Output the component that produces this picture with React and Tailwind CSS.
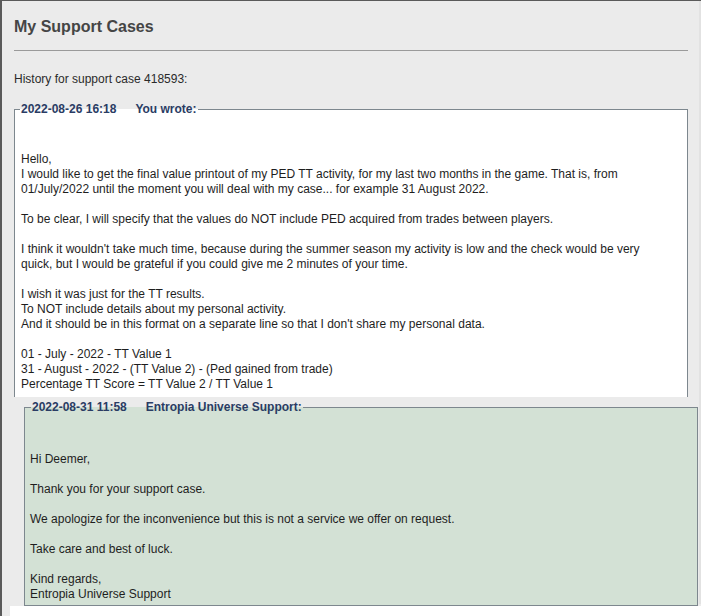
import React from 'react';

const FONT = { fontFamily: '"Liberation Sans", Arial, sans-serif' };

const customerText = [
  'Hello,',
  'I would like to get the final value printout of my PED TT activity, for my last two months in the game. That is, from',
  '01/July/2022 until the moment you will deal with my case... for example 31 August 2022.',
  '',
  'To be clear, I will specify that the values do NOT include PED acquired from trades between players.',
  '',
  "I think it wouldn't take much time, because during the summer season my activity is low and the check would be very",
  'quick, but I would be grateful if you could give me 2 minutes of your time.',
  '',
  'I wish it was just for the TT results.',
  'To NOT include details about my personal activity.',
  "And it should be in this format on a separate line so that I don't share my personal data.",
  '',
  '01 - July - 2022 - TT Value 1',
  '31 - August - 2022 - (TT Value 2) - (Ped gained from trade)',
  'Percentage TT Score = TT Value 2 / TT Value 1',
];

const supportText = [
  'Hi Deemer,',
  '',
  'Thank you for your support case.',
  '',
  'We apologize for the inconvenience but this is not a service we offer on request.',
  '',
  'Take care and best of luck.',
  '',
  'Kind regards,',
  'Entropia Universe Support',
];

function Lines({ lines }) {
  return (
    <div className="text-[12px] leading-[15px] text-[#1e1e1e]">
      {lines.map((l, i) => (
        <div key={i} className="h-[15px] whitespace-nowrap">{l}</div>
      ))}
    </div>
  );
}

function CaseEntry({ date, who, lines, className, legendClass }) {
  return (
    <fieldset className={`border border-[#7d878e] ${className}`}>
      <legend className={`px-[1px] text-[12px] font-bold leading-[14px] text-[#2a3c64] ${legendClass}`}>
        <span>{date}</span>
        <span className="ml-[19px]">{who}</span>
      </legend>
      <Lines lines={lines} />
    </fieldset>
  );
}

export default function App() {
  return (
    <div
      className="relative w-[701px] h-[616px] overflow-hidden bg-[#ebebeb] border-l-2 border-t border-[#5a5a5a] flex flex-col"
      style={FONT}
    >
      <div className="pl-[12px] pr-[13px] flex flex-col">
        {/* Header */}
        <h1 className="pt-[16px] text-[16px] font-bold leading-[20px] text-[#454545]">My Support Cases</h1>
        <div className="mt-[13px] h-px bg-[#9a9a9a]" />
        <p className="mt-[21px] text-[12px] leading-[15px] text-[#2a2a2a]">History for support case 418593:</p>

        {/* Customer message */}
        <CaseEntry
          date="2022-08-26 16:18"
          who="You wrote:"
          lines={customerText}
          legendClass="-ml-[1px]"
          className="mt-[15px] h-[295px] border-b-0 bg-white pl-[6px] pt-[36px] overflow-hidden"
        />

        {/* Support reply */}
        <CaseEntry
          date="2022-08-31 11:58"
          who="Entropia Universe Support:"
          lines={supportText}
          legendClass="ml-[1px]"
          className="mt-[3px] ml-[10px] -mr-[10px] h-[206px] bg-[#d3e1d5] pl-[5px] pt-[38px]"
        />
      </div>
      <div className="flex-1 ml-[8px] bg-white" />
      <div className="absolute right-0 top-0 bottom-[12px] w-[2px] bg-[#e2e2e2]" />
    </div>
  );
}
